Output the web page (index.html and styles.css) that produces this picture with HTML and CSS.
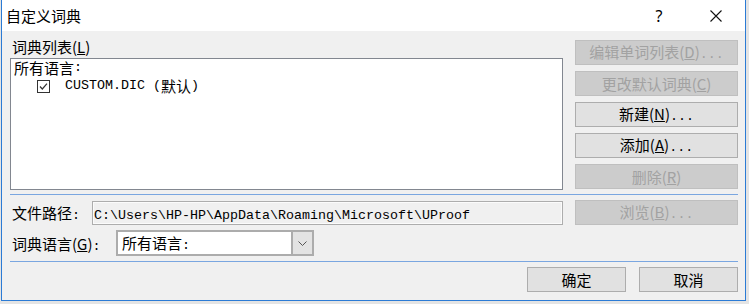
FILE: index.html
```html
<!DOCTYPE html>
<html lang="zh-CN">
<head>
    <meta charset="UTF-8">
    <title>自定义词典</title>
    <link rel="stylesheet" href="styles.css">
</head>
<body>
    <div class="window">
        <div class="titlebar">
            <div class="title">自定义词典</div>
            <div class="caption-btn help">?</div>
            <div class="caption-btn close">
                <svg width="12" height="12" viewBox="0 0 12 12">
                    <path d="M0.5 0.5 L11.5 11.5 M11.5 0.5 L0.5 11.5" stroke="#111" stroke-width="1.1" fill="none"/>
                </svg>
            </div>
        </div>

        <div class="content">
            <div class="top">
                <div class="list-col">
                    <div class="label">词典列表(<u>L</u>)</div>
                    <div class="listbox">
                        <div class="list-line">所有语言<span class="mono">:</span></div>
                        <div class="list-line item">
                            <svg class="check" width="13" height="13" viewBox="0 0 13 13">
                                <rect x="0.5" y="0.5" width="12" height="12" fill="#fff" stroke="#333"/>
                                <path d="M3 6.5 L5.3 9 L10 3.6" stroke="#333" stroke-width="1.2" fill="none"/>
                            </svg>
                            <span class="mono">CUSTOM.DIC (</span>默认<span class="mono">)</span>
                        </div>
                    </div>
                </div>
                <div class="btn-col">
                    <button class="btn" disabled>编辑单词列表(<u>D</u>)<span class="mono">...</span></button>
                    <button class="btn" disabled>更改默认词典(<u>C</u>)</button>
                    <button class="btn">新建(<u>N</u>)<span class="mono">...</span></button>
                    <button class="btn">添加(<u>A</u>)<span class="mono">...</span></button>
                    <button class="btn" disabled>删除(<u>R</u>)</button>
                </div>
            </div>

            <div class="separator"></div>

            <div class="row">
                <div class="row-label path-label">文件路径<span class="mono">:</span></div>
                <div class="path-box"><span class="mono">C:\Users\HP-HP\AppData\Roaming\Microsoft\UProof</span></div>
                <button class="btn browse" disabled>浏览(<u>B</u>)<span class="mono">...</span></button>
            </div>

            <div class="row lang-row">
                <div class="row-label lang-label">词典语言(<u>G</u>)<span class="mono">:</span></div>
                <div class="select">
                    <div class="select-text">所有语言<span class="mono">:</span></div>
                    <div class="drop">
                        <svg width="9" height="5" viewBox="0 0 9 5">
                            <path d="M0.5 0.5 L4.5 4.5 L8.5 0.5" stroke="#555" fill="none"/>
                        </svg>
                    </div>
                </div>
            </div>

            <div class="separator"></div>

            <div class="footer">
                <button class="btn dialog-btn">确定</button>
                <button class="btn dialog-btn">取消</button>
            </div>
        </div>
    </div>
</body>
</html>
```

FILE: styles.css
```css
* {
    box-sizing: border-box;
    margin: 0;
    padding: 0;
}
body {
    font-family: "Noto Sans CJK SC", sans-serif;
    font-size: 15px;
    color: #000;
    background-color: #e4e4e4;
}
.mono {
    font-family: "Liberation Mono", monospace;
    font-size: 13.33px;
}
u {
    text-decoration: underline;
    text-underline-offset: 1px;
}
.window {
    width: 745px;
    height: 301px;
    margin-left: 1px;
    border: 1px solid #2b7bd5;
    border-top: none;
    background-color: #f0f0f0;
    display: flex;
    flex-direction: column;
}
.titlebar {
    height: 31px;
    background-color: #fff;
    display: flex;
    align-items: center;
}
.title {
    flex: 1;
    padding-left: 4px;
    line-height: 30px;
}
.caption-btn {
    width: 46px;
    height: 31px;
    display: flex;
    align-items: center;
    justify-content: center;
}
.help {
    margin-right: 11px;
    font-family: "Noto Sans", sans-serif;
    font-size: 16px;
}
.close {
    margin-right: 6px;
}
.content {
    flex: 1;
    padding: 9px 7px 8px 8px;
}
.top {
    display: flex;
    gap: 12px;
}
.list-col {
    width: 553px;
}
.label {
    height: 18px;
    line-height: 13px;
    padding-left: 2px;
}
.listbox {
    height: 132px;
    background-color: #fff;
    border: 1px solid #828790;
    padding-left: 3px;
}
.list-line {
    height: 18px;
    line-height: 18px;
    display: flex;
    align-items: center;
}
.item {
    padding-left: 23px;
}
.check {
    margin-right: 15px;
}
.btn-col {
    width: 163px;
    display: flex;
    flex-direction: column;
    gap: 6px;
}
.btn {
    height: 25px;
    border: 1px solid #adadad;
    background-color: #e1e1e1;
    font-family: inherit;
    font-size: 15px;
    line-height: 22px;
    color: #000;
    text-align: center;
}
.btn:disabled {
    background-color: #cccccc;
    border-color: #bfbfbf;
    color: #a2a2a2;
}
.separator {
    height: 1px;
    margin-top: 4px;
    background-color: #7aa6e0;
}
.row {
    display: flex;
    align-items: center;
    margin-top: 5px;
    height: 25px;
}
.row-label {
    padding-left: 2px;
}
.path-label {
    width: 82px;
}
.path-box {
    width: 471px;
    height: 24px;
    border: 1px solid #adadad;
    box-shadow: inset 0 0 0 1px #fbfbfb;
    background-color: #f0f0f0;
    overflow: hidden;
    white-space: nowrap;
    line-height: 22px;
    padding-left: 1px;
}
.browse {
    width: 163px;
    margin-left: 12px;
}
.lang-row {
    height: 26px;
}
.lang-label {
    width: 106px;
}
.select {
    width: 198px;
    height: 26px;
    border: 2px solid #acacac;
    background-color: #fff;
    display: flex;
}
.select-text {
    flex: 1;
    padding-left: 4px;
    line-height: 22px;
}
.drop {
    width: 21px;
    border-left: 2px solid #acacac;
    background-color: #e3e3e3;
    display: flex;
    align-items: center;
    justify-content: center;
}
.lang-row + .separator {
    margin-top: 5px;
}
.footer {
    display: flex;
    justify-content: flex-end;
    gap: 13px;
    margin-top: 5px;
}
.dialog-btn {
    width: 99px;
}
```
